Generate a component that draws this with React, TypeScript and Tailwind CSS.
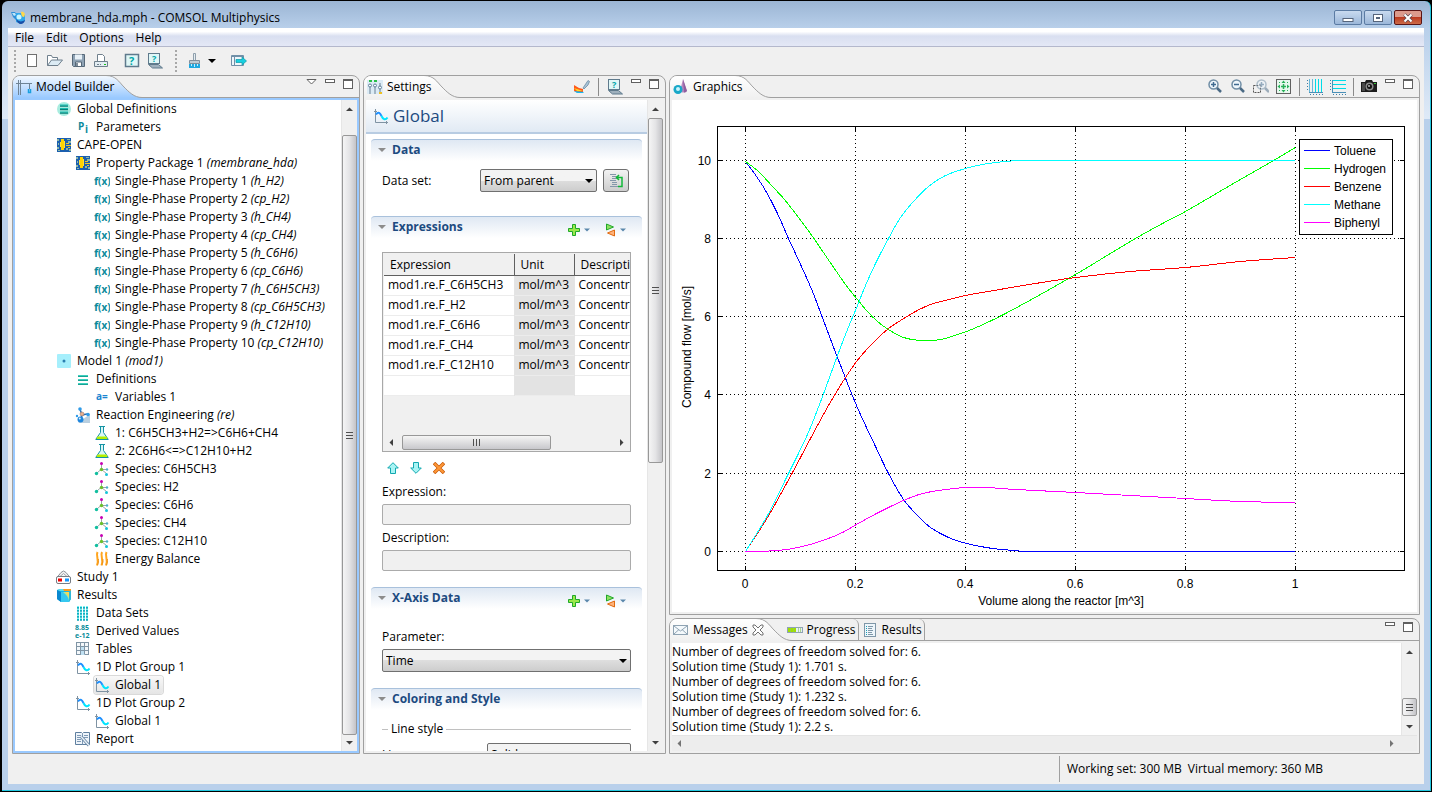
import React from 'react';
import clsx from 'clsx';

type IconName =
  | 'globalDefs' | 'params' | 'cape' | 'fx' | 'model' | 'defs' | 'vars' | 'reaction' | 'flask' | 'species'
  | 'energy' | 'study' | 'results' | 'dataSets' | 'derived' | 'tables' | 'plot' | 'report';

interface TreeNode {
  level: number;
  icon: IconName;
  label: string;
  tag?: string;
  selected?: boolean;
}

const property = (n: number, tag: string): TreeNode => ({
  level: 2,
  icon: 'fx',
  label: `Single-Phase Property ${n}`,
  tag,
});

const species = (name: string): TreeNode => ({ level: 2, icon: 'species', label: `Species: ${name}` });

const TREE: TreeNode[] = [
  { level: 0, icon: 'globalDefs', label: 'Global Definitions' },
  { level: 1, icon: 'params', label: 'Parameters' },
  { level: 0, icon: 'cape', label: 'CAPE-OPEN' },
  { level: 1, icon: 'cape', label: 'Property Package 1', tag: 'membrane_hda' },
  property(1, 'h_H2'),
  property(2, 'cp_H2'),
  property(3, 'h_CH4'),
  property(4, 'cp_CH4'),
  property(5, 'h_C6H6'),
  property(6, 'cp_C6H6'),
  property(7, 'h_C6H5CH3'),
  property(8, 'cp_C6H5CH3'),
  property(9, 'h_C12H10'),
  property(10, 'cp_C12H10'),
  { level: 0, icon: 'model', label: 'Model 1', tag: 'mod1' },
  { level: 1, icon: 'defs', label: 'Definitions' },
  { level: 2, icon: 'vars', label: 'Variables 1' },
  { level: 1, icon: 'reaction', label: 'Reaction Engineering', tag: 're' },
  { level: 2, icon: 'flask', label: '1: C6H5CH3+H2=>C6H6+CH4' },
  { level: 2, icon: 'flask', label: '2: 2C6H6<=>C12H10+H2' },
  species('C6H5CH3'),
  species('H2'),
  species('C6H6'),
  species('CH4'),
  species('C12H10'),
  { level: 2, icon: 'energy', label: 'Energy Balance' },
  { level: 0, icon: 'study', label: 'Study 1' },
  { level: 0, icon: 'results', label: 'Results' },
  { level: 1, icon: 'dataSets', label: 'Data Sets' },
  { level: 1, icon: 'derived', label: 'Derived Values' },
  { level: 1, icon: 'tables', label: 'Tables' },
  { level: 1, icon: 'plot', label: '1D Plot Group 1' },
  { level: 2, icon: 'plot', label: 'Global 1', selected: true },
  { level: 1, icon: 'plot', label: '1D Plot Group 2' },
  { level: 2, icon: 'plot', label: 'Global 1' },
  { level: 1, icon: 'report', label: 'Report' },
];

const INDENT = ['pl-[41px]', 'pl-[60px]', 'pl-[79px]'];

const EXPRESSIONS = ['mod1.re.F_C6H5CH3', 'mod1.re.F_H2', 'mod1.re.F_C6H6', 'mod1.re.F_CH4', 'mod1.re.F_C12H10'];

const MESSAGES = [
  'Number of degrees of freedom solved for: 6.',
  'Solution time (Study 1): 1.701 s.',
  'Number of degrees of freedom solved for: 6.',
  'Solution time (Study 1): 1.232 s.',
  'Number of degrees of freedom solved for: 6.',
  'Solution time (Study 1): 2.2 s.',
];

/* ---------- icons ---------- */

const Svg = ({ children, w = 16, h = 16 }: { children: React.ReactNode; w?: number; h?: number }) => (
  <svg width={w} height={h} viewBox={`0 0 ${w} ${h}`} fill="none" className="block shrink-0" aria-hidden="true">
    {children}
  </svg>
);

const PlotIcon = () => (
  <Svg>
    <path d="M2.500 1v13.500H15M1 3.500h3M13.500 13v3" stroke="#7f93a3" />
    <path d="M3 6.500C5.500 3 7 5 8.500 8" stroke="#1e90ff" strokeWidth="2" />
    <path d="M8.500 8C10 11.500 12.500 12.500 14.500 9.500" stroke="#00e5ff" strokeWidth="2" />
  </Svg>
);

const TreeIcon = ({ name }: { name: IconName }) => {
  switch (name) {
    case 'globalDefs':
      return (
        <Svg>
          <circle cx="8" cy="8" r="7" fill="#a8ecdf" />
          <path d="M4 5h8M4 8.500h8M4 12h8" stroke="#087f78" strokeWidth="1.500" />
          <path d="M4 4h8M4 7.500h8M4 11h8" stroke="#19bdb0" />
        </Svg>
      );
    case 'params':
      return (
        <Svg>
          <text x="3" y="11" fontSize="10" fontWeight="700" fill="#0b8a9b">P</text>
          <text x="10" y="14" fontSize="10" fontWeight="700" fill="#0b8a9b">i</text>
        </Svg>
      );
    case 'cape':
      return (
        <Svg>
          <rect x="1" y="1" width="14" height="14" fill="#1b5fae" />
          <path d="M1 2h2v2H1zM2 6h1v2H2zM1 10h2v2H1zM2 13h2v1H2zM11 2h3v1h-3zM12 4h3v2h-3zM10 11h2v2h-2zM13 12h2v2h-2z" fill="#8fb8a5" />
          <path d="M5 2h3v11H5z" fill="#ffd400" />
          <path d="M4 5h1v5H4zM8 4h1v7H8z" fill="#ffe040" />
          <path d="M10 6h3v1h-3zM10 8h5v1h-5zM12 10h2v1h-2z" fill="#e8c830" />
        </Svg>
      );
    case 'fx':
      return (
        <Svg>
          <text x="0" y="12" fontSize="11" fontWeight="700" fill="#0b8a9b">f</text>
          <text x="4" y="12" fontSize="10" fontWeight="700" fill="#0b8a9b">(x)</text>
        </Svg>
      );
    case 'model':
      return (
        <Svg>
          <rect x="1" y="1" width="14" height="14" rx="1" fill="#a6effc" />
          <circle cx="8" cy="8" r="1.500" fill="#2a7fb0" />
        </Svg>
      );
    case 'defs':
      return (
        <Svg>
          <path d="M3 5.500h10M3 9.500h10M3 13.500h10" stroke="#16a394" />
          <path d="M3 4.500h10M3 8.500h10M3 12.500h10" stroke="#3fd0bf" />
        </Svg>
      );
    case 'vars':
      return (
        <Svg>
          <text x="2" y="11" fontSize="10" fontWeight="700" fill="#1c86d1">a=</text>
        </Svg>
      );
    case 'reaction':
      return (
        <Svg>
          <path d="M3 16L15 7v9z" fill="#b9cfe0" />
          <path d="M5 2.500l2 5M7 8l5-1M7 8l-1 4" stroke="#2a6fb5" strokeWidth="1.500" />
          <circle cx="5" cy="2" r="1.800" fill="#2f9be8" />
          <circle cx="7" cy="7" r="2" fill="#e8b090" stroke="#8a6a60" strokeWidth=".5" />
          <circle cx="13" cy="7.500" r="1.800" fill="#2f9be8" />
          <circle cx="5.500" cy="12.500" r="3" fill="#1f86dd" />
          <circle cx="4.800" cy="11.500" r="1" fill="#d6f2ff" />
          <circle cx="2" cy="9" r="1.200" fill="#2f9be8" />
        </Svg>
      );
    case 'flask':
      return (
        <Svg>
          <path d="M6.500 1.500v6L2 14h12L9.500 7.500v-6" fill="#d9f6f6" stroke="#1593a5" />
          <path d="M3.500 11.500h9l1 2.500h-11z" fill="#b4f000" />
          <path d="M5 1.500h6M1.500 14.500h13" stroke="#1593a5" />
        </Svg>
      );
    case 'species':
      return (
        <Svg>
          <path d="M7.500 3v5L3 12M7.500 8.500l5 4M8 8.500h5" stroke="#9aa6a6" />
          <circle cx="7.500" cy="2.500" r="1.500" fill="#c800b4" />
          <circle cx="7.500" cy="8.500" r="1.700" fill="#6cc02a" />
          <circle cx="2.500" cy="12.500" r="1.700" fill="#12bfa0" />
          <circle cx="12.500" cy="13.500" r="1.500" fill="#15c5d8" />
          <circle cx="13" cy="8.500" r="1.200" fill="#4bb0c8" />
        </Svg>
      );
    case 'energy':
      return (
        <Svg>
          <path
            d="M3.500 1c-2 4 2 7-.500 13.500M8 1c-2 4 2 7-.500 13.500M12.500 1c-2 4 2 7-.500 13.500"
            stroke="#ffa51e"
            strokeWidth="2"
          />
          <path d="M4.500 8c0 2 0 4-1 6M9 8c0 2 0 4-1 6M13.500 8c0 2 0 4-1 6" stroke="#e88a10" strokeWidth=".8" />
        </Svg>
      );
    case 'study':
      return (
        <Svg>
          <path d="M1 8.500L5 3.500 7.500 2l2.500 1.500 4 5" fill="#f4f4f4" stroke="#8a8f96" />
          <path d="M4 7.500l3.500-3 3.500 3" stroke="#a0a5aa" />
          <rect x=".5" y="7.500" width="14" height="7" rx="1.500" fill="#fff" stroke="#777d85" />
          <rect x="2" y="9.500" width="4" height="3" fill="#f00000" />
          <rect x="9" y="9.500" width="4" height="3" fill="#1597ff" />
        </Svg>
      );
    case 'results':
      return (
        <Svg>
          <path d="M1 3l3-1h11v10l-2 3H5l-4-3z" fill="#18b5e6" />
          <path d="M1 3l3-1h11l-2 2H4z" fill="#55ddf0" />
          <path d="M7 2h8v2H8z" fill="#ff9a1a" />
          <path d="M5 5h8v10H5z" fill="#35c8f0" />
          <path d="M7 5h6v9c-1-5-3-6-6-9z" fill="#a8e8a0" />
          <path d="M9 5h4v6c-1-3-2-4-4-6z" fill="#ffd850" />
          <path d="M13 5l2-2v9l-2 3z" fill="#2fb8d8" />
          <path d="M1 3l4 2v10l-4-3z" fill="#0a88d0" />
        </Svg>
      );
    case 'dataSets':
      return (
        <Svg>
          <path d="M3 1.500v14M6 1.500v14M9 1.500v14M12 1.500v14" stroke="#00e0e8" strokeWidth="2" strokeDasharray="2 1" />
          <path d="M3 2.500v13M6 2.500v13M9 2.500v13M12 2.500v13" stroke="#1686a0" strokeWidth="2" strokeDasharray="1 2" />
        </Svg>
      );
    case 'derived':
      return (
        <Svg>
          <text x="0" y="7" fontSize="7" fontWeight="700" fill="#0a8c99">8.85</text>
          <text x="0" y="15" fontSize="7" fontWeight="700" fill="#0a8c99">e-12</text>
        </Svg>
      );
    case 'tables':
      return (
        <Svg>
          <rect x="1.500" y="1.500" width="12" height="12" fill="#f4f8fb" stroke="#8095a5" />
          <rect x="6" y="5" width="4" height="9" fill="#bfe0f2" />
          <path d="M1.500 5.500h12M1.500 9.500h12M5.500 1.500v12M9.500 1.500v12" stroke="#8095a5" />
        </Svg>
      );
    case 'plot':
      return <PlotIcon />;
    case 'report':
      return (
        <Svg>
          <path d="M.5 1.500h6l1 1 1-1h6v12h-14z" fill="#eef4fa" stroke="#5f7f9f" />
          <path d="M7.500 2.500v11M2 4.500h4M2 6.500h4M2 8.500h4M2 10.500h4M9 4.500h4M9 6.500h4" stroke="#7f9ab5" />
          <path d="M6 5.500l8 9" stroke="#5f7f9f" strokeWidth="3" />
          <path d="M6 5.500l8 9" stroke="#e8f1f8" strokeWidth="1.500" />
        </Svg>
      );
  }
};

const MagnifierIcon = ({ minus, faded }: { minus?: boolean; faded?: boolean }) => (
  <Svg>
    {faded && <path d="M.5 6.500h7v7h-7z" stroke="#555" strokeDasharray="2 1" />}
    <g opacity={faded ? 0.5 : 1} transform={faded ? 'translate(2 0)' : undefined}>
      <circle cx="6.500" cy="5.500" r="4.500" fill="#eef6fc" stroke="#6f8da5" strokeWidth="1.500" />
      <path d="M10 9l4 4" stroke="#4a6a85" strokeWidth="2.500" />
      <path d={minus ? 'M4 5.500h5' : 'M4 5.500h5M6.500 3v5'} stroke="#3f6a90" strokeWidth="1.500" />
    </g>
  </Svg>
);

const LaptopHelpIcon = () => (
  <Svg>
    <rect x="1.500" y=".5" width="11" height="10" fill="#dff7f7" stroke="#5f7a8c" />
    <text x="5" y="9" fontSize="9" fontWeight="700" fill="#00a8a8">?</text>
    <path d="M1.500 11.500h10l4 3.500h-10z" fill="#9fb0bd" stroke="#5f7a8c" />
  </Svg>
);

const TriangleDown = ({ className }: { className?: string }) => (
  <svg viewBox="0 0 8 4" width="8" height="4" className={clsx('block shrink-0', className)} aria-hidden="true">
    <path d="M0 0h8L4 4z" fill="currentColor" />
  </svg>
);

const IconButton = ({ label, children }: { label: string; children: React.ReactNode }) => (
  <button type="button" aria-label={label} className="flex h-4 shrink-0 items-center justify-center">
    {children}
  </button>
);

/* ---------- panel chrome ---------- */

const WindowControls = () => (
  <div className="flex items-start gap-2 self-start pt-[3px]">
    <button type="button" aria-label="Minimize" className="h-1 w-[10px] border border-[#606060] bg-white" />
    <button type="button" aria-label="Maximize" className="h-[10px] w-[10px] border border-t-2 border-[#606060] bg-white" />
  </div>
);

const Divider = () => <div className="h-[18px] w-px bg-[#8a8a8a]" />;

interface PanelProps {
  title: string;
  icon: React.ReactNode;
  active?: boolean;
  closable?: boolean;
  tools?: React.ReactNode;
  otherTabs?: React.ReactNode;
  className?: string;
  children: React.ReactNode;
}

const Panel = ({ title, icon, active, closable, tools, otherTabs, className, children }: PanelProps) => {
  const gradientId = `tab-${title.replace(' ', '-')}`;
  return (
    <section
      className={clsx(
        'flex min-h-0 min-w-0 flex-col overflow-hidden rounded-t-lg border border-[#a0a0a0] bg-[#f0f0f0]',
        className,
      )}
    >
      <header className="flex h-[22px] shrink-0 items-center border-b border-[#a0a0a0]">
        <div
          className={clsx(
            'flex h-[22px] shrink-0 items-center gap-1 self-start bg-gradient-to-b pl-[3px]',
            active ? 'from-[#f2f8ff] to-[#99c9ff]' : 'from-white to-[#f0f0f0]',
          )}
        >
          {icon}
          <h2 className="relative z-10">{title}</h2>
          {closable && (
            <button type="button" aria-label="Close tab" className="relative z-10">
              <Svg w={12} h={12}>
                <path d="M1 1h2l3 3 3-3h2v2L8 6l3 3v2H9L6 8l-3 3H1V9l3-3-3-3z" stroke="#707070" fill="#fff" />
              </Svg>
            </button>
          )}
        </div>
        <svg width="36" height="22" viewBox="0 0 36 22" className="-ml-2 block shrink-0 self-start" aria-hidden="true">
          <defs>
            <linearGradient id={gradientId} x1="0" y1="0" x2="0" y2="1">
              <stop offset="0" stopColor={active ? '#f2f8ff' : '#ffffff'} />
              <stop offset="1" stopColor={active ? '#99c9ff' : '#f0f0f0'} />
            </linearGradient>
          </defs>
          <path d="M0 0C10 0 13 6 18 11S28 21.500 36 21.500V22H0z" fill={`url(#${gradientId})`} />
          <path d="M0 -.5C10 -.5 13 6 18 11S28 21.500 36 21.500" fill="none" stroke="#a0a0a0" />
        </svg>
        {otherTabs}
        <div className="ml-auto flex h-full items-center gap-2 pr-[6px]">
          {tools}
          <WindowControls />
        </div>
      </header>
      <div className={clsx('flex min-h-0 flex-1 border-2', active ? 'border-[#99c9ff]' : 'border-[#f0f0f0]')}>
        {children}
      </div>
    </section>
  );
};

const ScrollArrow = ({ dir }: { dir: 'up' | 'down' | 'left' | 'right' }) => {
  const shapes = {
    up: 'M4 11h7L7.500 7.500z',
    down: 'M4 6h7L7.500 9.500z',
    left: 'M9 4v7L5.500 7.500z',
    right: 'M6 4v7l3.500-3.500z',
  };
  return (
    <button type="button" aria-label={`Scroll ${dir}`} className="block shrink-0">
      <Svg w={15} h={16}>
        <path d={shapes[dir]} fill="#404040" />
      </Svg>
    </button>
  );
};

const VScroll = ({ thumb }: { thumb: string }) => (
  <div className="flex w-4 shrink-0 flex-col border-l border-[#e6e6e6] bg-[#f0f0f0]">
    <ScrollArrow dir="up" />
    <div className="flex min-h-0 flex-1 flex-col">
      <div
        className={clsx(
          'flex flex-col items-center justify-center gap-[2px] rounded-[2px] border border-[#989898] bg-gradient-to-r from-[#f5f5f5] via-[#e4e4e6] to-[#c4c4c8]',
          thumb,
        )}
      >
        <span className="h-px w-[7px] bg-[#505050]" />
        <span className="h-px w-[7px] bg-[#505050]" />
        <span className="h-px w-[7px] bg-[#505050]" />
      </div>
    </div>
    <ScrollArrow dir="down" />
  </div>
);

/* ---------- model tree ---------- */

const ModelTree = () => (
  <div className="flex min-w-0 flex-1 bg-white">
    <ul className="min-w-0 flex-1 overflow-hidden">
      {TREE.map((node, i) => (
        <li key={i} className={clsx('flex h-[18px]', INDENT[node.level])}>
          <button
            type="button"
            className={clsx(
              'flex items-center gap-[5px] whitespace-nowrap rounded-[3px] pr-[2px]',
              node.selected && 'bg-gradient-to-b from-[#f8f8f8] to-[#e5e5e5] ring-1 ring-[#d9d9d9]',
            )}
          >
            <TreeIcon name={node.icon} />
            <span>
              {node.label}
              {node.tag && <em> ({node.tag})</em>}
            </span>
          </button>
        </li>
      ))}
    </ul>
    <VScroll thumb="mt-[19px] flex-1" />
  </div>
);

/* ---------- settings ---------- */

const AddMenus = () => (
  <div className="ml-auto flex items-center gap-[14px] pr-4 pt-[6px]">
    <button type="button" aria-label="Add expression" className="flex items-center gap-1 text-[#5a87ab]">
      <Svg w={12} h={12}>
        <path d="M4.500 .5h3v4h4v3h-4v4h-3v-4h-4v-3h4z" fill="#9be84a" stroke="#1fa82a" />
      </Svg>
      <TriangleDown className="w-[6px]" />
    </button>
    <button type="button" aria-label="Replace expression" className="flex items-center gap-1 text-[#5a87ab]">
      <Svg w={12} h={14}>
        <path d="M2.500 1v6l7-3z" fill="#8fe060" stroke="#1fa82a" />
        <path d="M10.500 7v6L3.500 10z" fill="#ffb27a" stroke="#e06a10" />
      </Svg>
      <TriangleDown className="w-[6px]" />
    </button>
  </div>
);

const SectionHeader = ({ title, menus }: { title: string; menus?: boolean }) => (
  <div className="mx-[5px] flex h-[22px] items-center rounded-t border-t border-[#a9c1dc] bg-gradient-to-b from-[#dfe8f3] to-white pb-[2px] pl-[7px]">
    <TriangleDown className="text-[#8c8c8c]" />
    <h3 className="ml-[6px] font-bold text-[#1c4a80]">{title}</h3>
    {menus && <AddMenus />}
  </div>
);

const comboClass =
  'h-[23px] w-full appearance-none rounded-[2px] border border-[#707070] bg-gradient-to-b from-[#f3f3f3] from-50% via-[#dedede] via-50% to-[#cdcdcd] pl-[3px] text-black';

const Combo = ({ id, value, className }: { id: string; value: string; className?: string }) => (
  <div className={clsx('relative', className)}>
    <select id={id} defaultValue={value} className={comboClass}>
      <option>{value}</option>
    </select>
    <TriangleDown className="pointer-events-none absolute right-1 top-[10px]" />
  </div>
);

const inputClass = 'mt-1 block h-[21px] w-full rounded-[2px] border border-[#ababab] bg-[#f0f0f0] px-1';

const SettingsForm = () => (
  <div className="flex min-w-0 flex-1 bg-white">
    <form className="min-w-0 flex-1 overflow-hidden">
      <div className="flex h-[34px] items-center gap-1 border-b-2 border-[#b8cce2] bg-gradient-to-b from-white to-[#e1eaf4] pl-[7px]">
        <PlotIcon />
        <h1 className="text-[17px] text-[#1c4a80]">Global</h1>
      </div>

      <div className="pt-[5px]">
        <SectionHeader title="Data" />
        <div className="flex items-center px-4 pb-6 pt-2">
          <label htmlFor="data-set" className="w-[98px]">Data set:</label>
          <Combo id="data-set" value="From parent" className="flex-1" />
          <button
            type="button"
            aria-label="Go to source"
            className="ml-[6px] mr-[2px] flex h-[23px] w-[26px] items-center justify-center rounded-[3px] border border-[#707070] bg-gradient-to-b from-[#f3f3f3] to-[#cdcdcd]"
          >
            <Svg>
              <path d="M2 1.500h6M4 3.500h5M4 5.500h5M2 7.500h6M4 9.500h5M4 11.500h5M2 13.500h8" stroke="#8497aa" />
              <path d="M9 4.500h5v9h-4M11 2l-2.500 2.500L11 7" stroke="#12b838" strokeWidth="1.500" />
            </Svg>
          </button>
        </div>
      </div>

      <SectionHeader title="Expressions" menus />
      <div className="px-4 pt-[14px]">
        <div className="flex h-[200px] flex-col overflow-hidden border border-[#a8a8a8] bg-[#f0f0f0] p-px pb-0">
          <table className="w-[320px] table-fixed border-collapse text-left">
            <thead>
              <tr className="h-[21px] border-b border-[#606060] bg-[#f0f0f0]">
                <th className="w-[130px] border-r border-[#606060] pl-[6px] pt-px font-normal">Expression</th>
                <th className="w-[60px] border-r border-[#606060] pl-[6px] pt-px font-normal">Unit</th>
                <th className="pl-[6px] pt-px font-normal">Description</th>
              </tr>
            </thead>
            <tbody>
              {[...EXPRESSIONS, ''].map((expr) => (
                <tr key={expr} className="h-5 border-b border-[#ececec] bg-white">
                  <td className="border-r border-[#e4e4e4] pl-1">{expr}</td>
                  <td className="border-r border-[#e4e4e4] bg-[#e3e3e3] pl-1">{expr && 'mol/m^3'}</td>
                  <td className="pl-1">{expr && 'Concentration'}</td>
                </tr>
              ))}
            </tbody>
          </table>
          <div className="mt-auto flex h-[17px] shrink-0 items-center">
            <ScrollArrow dir="left" />
            <div className="flex flex-1">
              <div className="ml-[3px] flex h-[15px] w-[149px] items-center justify-center gap-[2px] rounded-[2px] border border-[#989898] bg-gradient-to-b from-[#f5f5f5] to-[#c8c8cc]">
                <span className="h-[7px] w-px bg-[#505050]" />
                <span className="h-[7px] w-px bg-[#505050]" />
                <span className="h-[7px] w-px bg-[#505050]" />
              </div>
            </div>
            <ScrollArrow dir="right" />
          </div>
        </div>

        <div className="mt-2 flex h-4 items-center gap-[11px] pl-[5px]">
          <IconButton label="Move up">
            <Svg w={12} h={12}>
              <path d="M6 .7L11.300 6H8.500v5.500h-5V6H.7z" fill="#a8f4f4" stroke="#12a8b0" />
            </Svg>
          </IconButton>
          <IconButton label="Move down">
            <Svg w={12} h={12}>
              <path d="M6 11.300L.7 6h2.800V.5h5V6h2.800z" fill="#a8f4f4" stroke="#12a8b0" />
            </Svg>
          </IconButton>
          <IconButton label="Delete">
            <Svg w={12} h={12}>
              <path d="M1 1l10 10M11 1L1 11" stroke="#c85a08" strokeWidth="3.500" />
              <path d="M1.500 1.500l9 9M10.500 1.500l-9 9" stroke="#ff9838" strokeWidth="2" />
            </Svg>
          </IconButton>
        </div>

        <label htmlFor="expression" className="mt-2 block h-4 leading-4">Expression:</label>
        <input id="expression" className={inputClass} />
        <label htmlFor="description" className="mt-[5px] block h-4 leading-4">Description:</label>
        <input id="description" className={clsx(inputClass, 'mb-4')} />
      </div>

      <SectionHeader title="X-Axis Data" menus />
      <div className="px-4 pb-4 pt-5">
        <label htmlFor="parameter" className="mb-1 block h-4 leading-4">Parameter:</label>
        <Combo id="parameter" value="Time" />
      </div>

      <SectionHeader title="Coloring and Style" />
      <fieldset className="px-4 pt-[11px]">
        <div className="flex h-4 items-center gap-[3px]">
          <span className="h-px w-[6px] bg-[#c0c0c0]" />
          <span>Line style</span>
          <span className="h-px flex-1 bg-[#c0c0c0]" />
        </div>
        <div className="mt-[6px] flex items-center">
          <label htmlFor="line" className="w-[105px]">Line:</label>
          <Combo id="line" value="Solid" className="flex-1" />
        </div>
      </fieldset>
    </form>
    <VScroll thumb="mt-[2px] h-[345px]" />
  </div>
);

/* ---------- graphics ---------- */

type Point = [number, number];

const CURVES: { name: string; color: string; points: Point[] }[] = [
  {
    name: 'Toluene',
    color: '#0000ff',
    points: [
      [745, 161], [754, 173], [765, 190], [777, 213], [788, 238], [801, 266], [812, 291], [823, 320], [837, 357],
      [856, 405], [875, 446], [888, 473], [903, 499], [917, 515], [930, 527], [948, 537], [966, 543], [992, 548],
      [1015, 550], [1050, 551], [1295, 551],
    ],
  },
  {
    name: 'Hydrogen',
    color: '#00ff00',
    points: [
      [745, 161], [758, 171], [772, 186], [784, 199], [798, 217], [812, 236], [825, 255], [838, 274], [848, 288],
      [857, 299], [866, 310], [877, 321], [888, 329], [903, 337], [920, 340], [940, 339], [966, 331], [989, 321],
      [1005, 313], [1040, 294], [1075, 274], [1100, 259], [1135, 238], [1162, 223], [1185, 211], [1233, 183],
      [1273, 160], [1295, 147],
    ],
  },
  {
    name: 'Benzene',
    color: '#ff0000',
    points: [
      [745, 551], [767, 517], [792, 472], [810, 438], [828, 405], [845, 377], [860, 356], [877, 338], [888, 328],
      [900, 320], [915, 311], [930, 304], [945, 300], [965, 295], [1005, 288], [1035, 283], [1075, 277],
      [1130, 271], [1185, 267], [1240, 261], [1295, 257],
    ],
  },
  {
    name: 'Methane',
    color: '#00ffff',
    points: [
      [745, 551], [767, 515], [788, 473], [807, 434], [822, 396], [837, 355], [847, 329], [857, 305], [865, 285],
      [875, 263], [888, 238], [900, 217], [913, 201], [928, 186], [945, 175], [965, 168], [982, 164], [1005, 161],
      [1050, 160], [1295, 160],
    ],
  },
  {
    name: 'Biphenyl',
    color: '#ff00ff',
    points: [
      [745, 551], [778, 550], [802, 546], [825, 539], [842, 532], [856, 524], [878, 512], [903, 500], [922, 493],
      [945, 489], [965, 487], [987, 487], [1015, 489], [1075, 492], [1130, 495], [1185, 498], [1240, 501],
      [1295, 502],
    ],
  },
];

// Catmull-Rom spline through the points, written as cubic segments
const smoothPath = (points: Point[]) =>
  points.slice(1).reduce((d, p, i) => {
    const before = points[Math.max(i - 1, 0)];
    const from = points[i];
    const after = points[Math.min(i + 2, points.length - 1)];
    const c1 = [from[0] + (p[0] - before[0]) / 6, from[1] + (p[1] - before[1]) / 6];
    const c2 = [p[0] - (after[0] - from[0]) / 6, p[1] - (after[1] - from[1]) / 6];
    return `${d}C${c1} ${c2} ${p}`;
  }, `M${points[0]}`);

const X_TICKS = [
  { x: 745, label: '0' },
  { x: 855, label: '0.2' },
  { x: 965, label: '0.4' },
  { x: 1075, label: '0.6' },
  { x: 1185, label: '0.8' },
  { x: 1295, label: '1' },
];

const Y_TICKS = [
  { y: 160, label: '10' },
  { y: 238, label: '8' },
  { y: 316, label: '6' },
  { y: 394, label: '4' },
  { y: 473, label: '2' },
  { y: 551, label: '0' },
];

const FlowChart = () => (
  <div className="min-w-0 flex-1 bg-white">
    <svg
      viewBox="672 100 745 512"
      className="block h-full w-full font-['Liberation_Sans',Arial,sans-serif]"
      shapeRendering="crispEdges"
      fontSize="12"
      role="img"
      aria-label="Compound flow"
    >
      <g stroke="#000" strokeDasharray="1 3">
        {X_TICKS.map((t) => (
          <path key={t.x} d={`M${t.x + 0.5} 127v443`} />
        ))}
        {Y_TICKS.map((t) => (
          <path key={t.y} d={`M718 ${t.y + 0.5}h686`} />
        ))}
      </g>
      <g stroke="#000">
        {X_TICKS.map((t) => (
          <path key={t.x} d={`M${t.x + 0.5} 127v4M${t.x + 0.5} 570v-4`} />
        ))}
        {Y_TICKS.map((t) => (
          <path key={t.y} d={`M718 ${t.y + 0.5}h4M1404 ${t.y + 0.5}h-4`} />
        ))}
        <rect x="717.5" y="126.5" width="687" height="444" fill="none" />
      </g>
      {CURVES.map((c) => (
        <path key={c.name} d={smoothPath(c.points)} fill="none" stroke={c.color} transform="translate(.5 .5)" />
      ))}
      {X_TICKS.map((t) => (
        <text key={t.x} x={t.x} y="588" textAnchor="middle">{t.label}</text>
      ))}
      {Y_TICKS.map((t) => (
        <text key={t.y} x="711" y={t.y + 5} textAnchor="end">{t.label}</text>
      ))}
      <text x="1061" y="605" textAnchor="middle">Volume along the reactor [m^3]</text>
      <text transform="translate(691 347) rotate(-90)" textAnchor="middle">Compound flow [mol/s]</text>

      <rect x="1299.5" y="139.5" width="93" height="95" fill="#fff" stroke="#000" />
      {CURVES.map((c, i) => (
        <g key={c.name}>
          <path d={`M1304 ${150.5 + i * 18}h26`} stroke={c.color} />
          <text x="1334" y={155 + i * 18}>{c.name}</text>
        </g>
      ))}
    </svg>
  </div>
);

const GraphicsTools = () => (
  <div className="flex items-center gap-[7px]">
    <IconButton label="Zoom in"><MagnifierIcon /></IconButton>
    <IconButton label="Zoom out"><MagnifierIcon minus /></IconButton>
    <IconButton label="Zoom box"><MagnifierIcon faded /></IconButton>
    <IconButton label="Zoom extents">
      <Svg>
        <rect x=".5" y=".5" width="14" height="14" fill="#e8f8ee" stroke="#606060" />
        <path d="M7.500 1.500l2 2.500h-4zM7.500 13.500l2-2.500h-4zM1.500 7.500L4 5.500v4zM13.500 7.500L11 5.500v4z" fill="#28b058" />
        <path d="M7.500 5v5M5 7.500h5" stroke="#28b058" strokeWidth="1.500" />
        <path d="M3 3.500h1M11 3.500h1M3 11.500h1M11 11.500h1" stroke="#28b058" />
      </Svg>
    </IconButton>
    <Divider />
    <IconButton label="X grid">
      <Svg>
        <path d="M.5 1v12M3 15.500h13" stroke="#3c7fa8" strokeDasharray="1 2" />
        <path d="M2.500 0v14M5.500 0v14" stroke="#6ab8d8" />
        <path d="M8.500 0v13M11.500 0v13M14.500 0v13" stroke="#00dce8" />
        <path d="M2 13.500h14" stroke="#4a90b8" />
      </Svg>
    </IconButton>
    <IconButton label="Y grid">
      <Svg>
        <path d="M.5 1v12M3 15.500h13" stroke="#3c7fa8" strokeDasharray="1 2" />
        <path d="M2.500 1v12" stroke="#4a90b8" />
        <path d="M3 1.500h13M3 5.500h13M3 9.500h13" stroke="#00dce8" />
        <path d="M2 13.500h14" stroke="#4a90b8" />
      </Svg>
    </IconButton>
    <Divider />
    <IconButton label="Image snapshot">
      <Svg>
        <path d="M0 3h4l1-2h6l1 2h4v10H0z" fill="#1c1c1c" />
        <path d="M1 4h3v8H1z" fill="#4a4a4a" />
        <circle cx="8.500" cy="7.500" r="4" fill="#8a8a8a" />
        <circle cx="8.500" cy="7.500" r="2.500" fill="#111" />
        <circle cx="8" cy="7" r="1" fill="#bbb" />
        <path d="M13 4h2v1h-2z" fill="#38c838" />
      </Svg>
    </IconButton>
  </div>
);

/* ---------- messages ---------- */

const OtherTab = ({ title, icon }: { title: string; icon: React.ReactNode }) => (
  <button type="button" className="flex h-[22px] items-center gap-1 self-start rounded-tr-md border-r border-[#a0a0a0] pl-[3px] pr-[2px]">
    {icon}
    {title}
  </button>
);

const Messages = () => (
  <div className="flex min-w-0 flex-1 flex-col">
    <div className="flex min-h-0 flex-1">
      <div className="min-w-0 flex-1 overflow-hidden bg-white pt-px">
        {MESSAGES.map((m, i) => (
          <p key={i} className="whitespace-nowrap leading-[15px]">{m}</p>
        ))}
      </div>
      <VScroll thumb="mb-[3px] mt-auto h-[18px]" />
    </div>
    <div className="flex h-4 shrink-0 items-center justify-between border-t border-[#e0e0e0] bg-[#ececec] pr-[18px] opacity-70">
      <ScrollArrow dir="left" />
      <ScrollArrow dir="right" />
    </div>
  </div>
);

/* ---------- application bars ---------- */

const TitleBar = () => (
  <div className="flex h-[27px] shrink-0 items-center px-[2px] pt-[6px]">
    <Svg>
      <path d="M1 2h4l2 3-1 5-3-3z" fill="#2f8fd8" />
      <path d="M2 3l3 0 1 2-2 1z" fill="#bfe8fa" />
      <path d="M6 3h5l4 2v6l-4 3-5-2z" fill="#2fa8ec" />
      <path d="M11 2c3-1 5 2 3 5-2 0-3-2-3-5z" fill="#ffd84a" />
      <path d="M6 9c3 3 6 3 9 1-1 5-7 6-9-1z" fill="#1a4fa8" />
      <circle cx="9" cy="7" r="2.500" fill="#c8f4ff" />
    </Svg>
    <span className="ml-1">membrane_hda.mph - COMSOL Multiphysics</span>
    <div className="ml-auto flex gap-[2px]">
      <button type="button" aria-label="Minimize window" className="flex h-[15px] w-7 items-center justify-center rounded-[2px] border border-[#5b7ba3] bg-gradient-to-b from-[#c9daef] to-[#9bb7d9]">
        <Svg w={12} h={10}><rect x="1" y="5.500" width="10" height="3" fill="#fff" stroke="#56657c" /></Svg>
      </button>
      <button type="button" aria-label="Restore window" className="flex h-[15px] w-7 items-center justify-center rounded-[2px] border border-[#5b7ba3] bg-gradient-to-b from-[#c9daef] to-[#9bb7d9]">
        <Svg w={12} h={10}>
          <rect x="1.500" y="1.500" width="9" height="7" fill="#fff" stroke="#56657c" />
          <rect x="4.500" y="4.500" width="3" height="1" fill="#9bb7d9" stroke="#56657c" />
        </Svg>
      </button>
      <button type="button" aria-label="Close window" className="flex h-[15px] w-7 items-center justify-center rounded-[2px] border border-[#5a1414] bg-gradient-to-b from-[#dc9a8c] from-50% via-[#bc3a20] via-50% to-[#cc6a48]">
        <Svg w={12} h={10}>
          <path d="M2.500 1.500l7 7M9.500 1.500l-7 7" stroke="#5f4a52" strokeWidth="3.500" />
          <path d="M2.500 1.500l7 7M9.500 1.500l-7 7" stroke="#fff" strokeWidth="2" />
        </Svg>
      </button>
    </div>
  </div>
);

const Grip = () => <div className="h-[22px] w-[2px] border-l-2 border-dotted border-[#a8a8a8]" />;

const Toolbar = () => (
  <div className="flex h-7 shrink-0 items-center pl-[6px]">
    <Grip />
    <div className="ml-2 flex gap-[7px]">
      <IconButton label="New">
        <Svg><rect x="3.500" y="1.500" width="9" height="12" fill="#fff" stroke="#707070" /></Svg>
      </IconButton>
      <IconButton label="Open">
        <Svg>
          <path d="M.5 12.500v-10h4l1 2h5v3" fill="#fff" stroke="#6f7f8c" />
          <path d="M.5 12.500l4-5.500h11l-4.500 5.500z" fill="#dcebf4" stroke="#6f7f8c" />
        </Svg>
      </IconButton>
      <IconButton label="Save">
        <Svg>
          <path d="M2.500 1.500h12v12h-11l-1-1z" fill="#8fa3b5" stroke="#566878" />
          <path d="M5 1.500h7v5H5z" fill="#e8f1f7" />
          <path d="M5.500 9h6v4.500h-6z" fill="#fff" stroke="#566878" />
          <path d="M7 10v3" stroke="#566878" strokeWidth="1.500" />
        </Svg>
      </IconButton>
      <IconButton label="Print">
        <Svg>
          <path d="M4.500 8V1.500h5l2 2V8" fill="#fff" stroke="#6f7f8c" />
          <path d="M1.500 8.500h13v5h-13z" fill="#e3edf3" stroke="#6f7f8c" />
          <path d="M4 11.500h2M7 11.500h1" stroke="#6f7f8c" />
          <path d="M11 11.500h2" stroke="#18c018" />
        </Svg>
      </IconButton>
    </div>
    <div className="ml-[15px] flex gap-[7px]">
      <IconButton label="Help">
        <Svg>
          <rect x="1.500" y="1.500" width="13" height="12" fill="#dff7f7" stroke="#5f7a8c" strokeWidth="1.500" />
          <text x="5" y="12" fontSize="11" fontWeight="700" fill="#00a8a8">?</text>
        </Svg>
      </IconButton>
      <IconButton label="Documentation"><LaptopHelpIcon /></IconButton>
    </div>
    <div className="ml-3"><Grip /></div>
    <div className="ml-[10px] flex items-center gap-[5px]">
      <IconButton label="Clear">
        <Svg>
          <path d="M6.500 .5h2v7h-2z" fill="#e4ecf0" stroke="#8f9fac" />
          <path d="M2.500 7.500h10v3h-10z" fill="#c0ccd4" stroke="#7f8f9c" />
          <path d="M2 11h11v4H2z" fill="#1fa8e0" />
          <path d="M4.500 11v2M7.500 11v3M10.500 11v2" stroke="#c0f0ff" />
        </Svg>
      </IconButton>
      <button type="button" aria-label="Clear options"><TriangleDown /></button>
    </div>
    <div className="ml-[15px]">
      <IconButton label="Switch window">
        <Svg>
          <path d="M.5 2.500h12v10H.5z" fill="#eef6fb" stroke="#7090a8" />
          <path d="M1 3h12v1H1z" fill="#7090a8" />
          <path d="M3.500 4v8" stroke="#7090a8" />
          <path d="M5 6.500h6V4l4.500 4-4.500 4V9.500H5z" fill="#18d0e0" stroke="#0a98a8" strokeWidth=".7" />
        </Svg>
      </IconButton>
    </div>
  </div>
);

const MenuBar = () => (
  <nav className="flex h-[19px] shrink-0 items-center gap-3 border-b border-[#b4b8cc] bg-gradient-to-b from-white from-20% via-[#d9dff0] via-45% to-[#e4e8f6] pl-[7px] pt-[2px]">
    {['File', 'Edit', 'Options', 'Help'].map((m) => (
      <button key={m} type="button">{m}</button>
    ))}
  </nav>
);

export default function App() {
  return (
    <div className="flex h-screen flex-col bg-black pb-px pl-[2px] pr-px pt-px font-['Open_Sans','Segoe_UI',sans-serif] text-[12px] leading-4 text-black">
      <div className="flex min-h-0 flex-1 flex-col rounded-t-md border-b border-r border-[#22c8e0] bg-[linear-gradient(to_bottom,#9bb5d4_0,#b8cfea_27px,#dfeaf7_118px,#b9d0eb_118px)] px-[6px] pb-[6px]">
        <TitleBar />
        <div className="flex min-h-0 flex-1 flex-col bg-[#f0f0f0]">
          <MenuBar />
          <Toolbar />
          <main className="grid min-h-0 flex-1 grid-cols-[348px_303px_minmax(0,1fr)] grid-rows-[minmax(0,1fr)] gap-[3px] px-1">
            <Panel
              title="Model Builder"
              active
              icon={
                <Svg>
                  <path d="M4.500 1v15M2.500 1v15M0 4.500h16" stroke="#6f8496" />
                  <path d="M13.500 4v6" stroke="#6f8496" />
                  <path d="M12.500 10v3.500h2V10" stroke="#18a0e0" strokeWidth="1.500" />
                </Svg>
              }
              tools={
                <button type="button" aria-label="View menu" className="self-start pt-[3px]">
                  <Svg w={11} h={6}><path d="M1 .5h9L5.500 5z" fill="#fff" stroke="#606060" /></Svg>
                </button>
              }
            >
              <ModelTree />
            </Panel>

            <Panel
              title="Settings"
              icon={
                <Svg>
                  <rect x="0" y="1" width="16" height="14" fill="#dcebf5" />
                  <path d="M3 7v8M8 7v8M13 4v9" stroke="#8fa3b3" strokeWidth="1.500" />
                  <circle cx="3" cy="6.500" r="1.500" fill="#fff" stroke="#5f7f99" />
                  <circle cx="8" cy="6.500" r="1.500" fill="#fff" stroke="#5f7f99" />
                  <circle cx="13" cy="8.500" r="1.500" fill="#fff" stroke="#5f7f99" />
                  <path d="M2 2h3M7 2h3" stroke="#28c048" strokeWidth="2" />
                  <path d="M12 14h3" stroke="#f0c020" strokeWidth="2" />
                </Svg>
              }
              tools={
                <>
                  <IconButton label="Plot">
                    <Svg>
                      <path d="M0 6l5 3 4 1v4H4L0 12z" fill="#ff5a1a" />
                      <path d="M0 9l6 2 3 1H3z" fill="#ffd820" />
                      <path d="M0 12l10 1-1 1H3z" fill="#18b8f0" />
                      <path d="M9 9l5-7.500 1.500 1L14 6l-4 4z" fill="#a8c4d8" stroke="#5f7f99" strokeWidth=".7" />
                    </Svg>
                  </IconButton>
                  <Divider />
                  <IconButton label="Help"><LaptopHelpIcon /></IconButton>
                </>
              }
            >
              <SettingsForm />
            </Panel>

            <div className="flex min-h-0 min-w-0 flex-col gap-[3px]">
              <Panel
                title="Graphics"
                className="flex-1"
                icon={
                  <Svg>
                    <path d="M10 0l4 12c-2 2-5 2-7 0z" fill="#b888c0" />
                    <path d="M10 0l4 12c-1 1-2 1.500-3 1.500z" fill="#8f5f9f" />
                    <circle cx="5" cy="10.500" r="4.500" fill="#18a8c8" />
                    <circle cx="5" cy="10" r="2" fill="#c8f4fc" />
                  </Svg>
                }
                tools={<GraphicsTools />}
              >
                <FlowChart />
              </Panel>

              <Panel
                title="Messages"
                closable
                className="h-[136px] shrink-0"
                icon={
                  <Svg>
                    <rect x=".5" y="3.500" width="14" height="9" fill="#f4f9fc" stroke="#8fa3b3" />
                    <path d="M1 4l6.500 5L14 4M1 12l5-4.500M14 12L9 7.500" stroke="#8fa3b3" />
                  </Svg>
                }
                otherTabs={
                  <div className="-ml-2 flex self-start">
                    <OtherTab
                      title="Progress"
                      icon={
                        <Svg>
                          <rect x=".5" y="5.500" width="15" height="5" fill="#e8f1f6" stroke="#8fa3b3" />
                          <path d="M1 6h8v4H1z" fill="#a0e000" />
                          <path d="M3.500 6v4M6.500 6v4M11.500 6v4M13.500 6v4" stroke="#8fc860" strokeWidth=".7" />
                        </Svg>
                      }
                    />
                    <OtherTab
                      title="Results"
                      icon={
                        <Svg>
                          <rect x="2.500" y="1.500" width="11" height="13" fill="#eef6fb" stroke="#7f97a8" />
                          <path d="M4 4.500h1M4 6.500h1M4 8.500h1M4 10.500h1M4 12.500h1" stroke="#18a0b8" />
                          <path d="M6 4.500h5M6 6.500h4M6 8.500h5M6 10.500h4M6 12.500h5" stroke="#7f97a8" />
                        </Svg>
                      }
                    />
                  </div>
                }
              >
                <Messages />
              </Panel>
            </div>
          </main>
          <footer className="flex h-[30px] shrink-0 items-center justify-end">
            <div className="flex h-[26px] w-[365px] items-center gap-[6px] border-l border-[#a0a0a0] pl-[7px]">
              <span>Working set: 300 MB</span>
              <span>Virtual memory: 360 MB</span>
            </div>
          </footer>
        </div>
      </div>
    </div>
  );
}
